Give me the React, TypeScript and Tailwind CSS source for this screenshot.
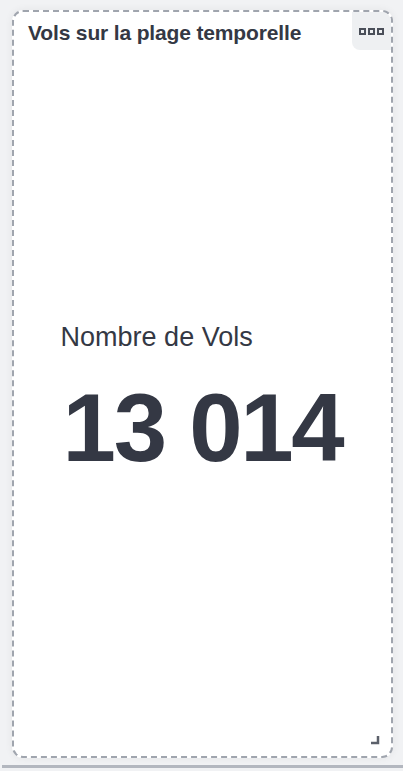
export default function App() {
  return (
    <div className="h-[771px] w-[403px] bg-[#f1f2f4] font-['Liberation_Sans',Arial,sans-serif] text-[#343844] overflow-hidden">
      <div className="pt-[10px] pl-[12px] pr-[10px]">
        <div className="relative h-[748px] w-[381px] rounded-[11px] border-2 border-dashed border-[#a0a5ae] bg-white shadow-[0_0_8px_rgba(0,0,0,0.06)] flex flex-col">
          <div className="flex items-start justify-between">
            <h2 className="pl-[14px] pt-[9px] text-[21px] font-bold leading-[24px] tracking-[-0.15px]">
              Vols sur la plage temporelle
            </h2>
            <button className="h-[38px] w-[39px] rounded-bl-[8px] rounded-tr-[9px] bg-[#eef0f2] flex items-center justify-center gap-[2px]">
              <span className="h-[7px] w-[7px] border-2 border-[#4a4f59]" />
              <span className="h-[7px] w-[7px] border-2 border-[#4a4f59]" />
              <span className="h-[7px] w-[7px] border-2 border-[#4a4f59]" />
            </button>
          </div>
          <div className="flex-1 flex items-center justify-center pb-[8px]">
            <div className="flex flex-col">
              <span className="text-[27px] leading-[30px] ml-[-2px]">Nombre de Vols</span>
              <span className="mt-[28px] text-[96px] font-bold leading-[96px] tracking-[-2.3px]">13 014</span>
            </div>
          </div>
          <svg className="absolute right-[11px] bottom-[11px]" width="10" height="10" viewBox="0 0 10 10">
            <path d="M8 1 V8 H1" fill="none" stroke="#5b606a" strokeWidth="2.5" />
          </svg>
        </div>
      </div>
      <div className="mt-[7px] ml-[2px] h-[3px] bg-[#b3b7bf]" />
    </div>
  );
}
